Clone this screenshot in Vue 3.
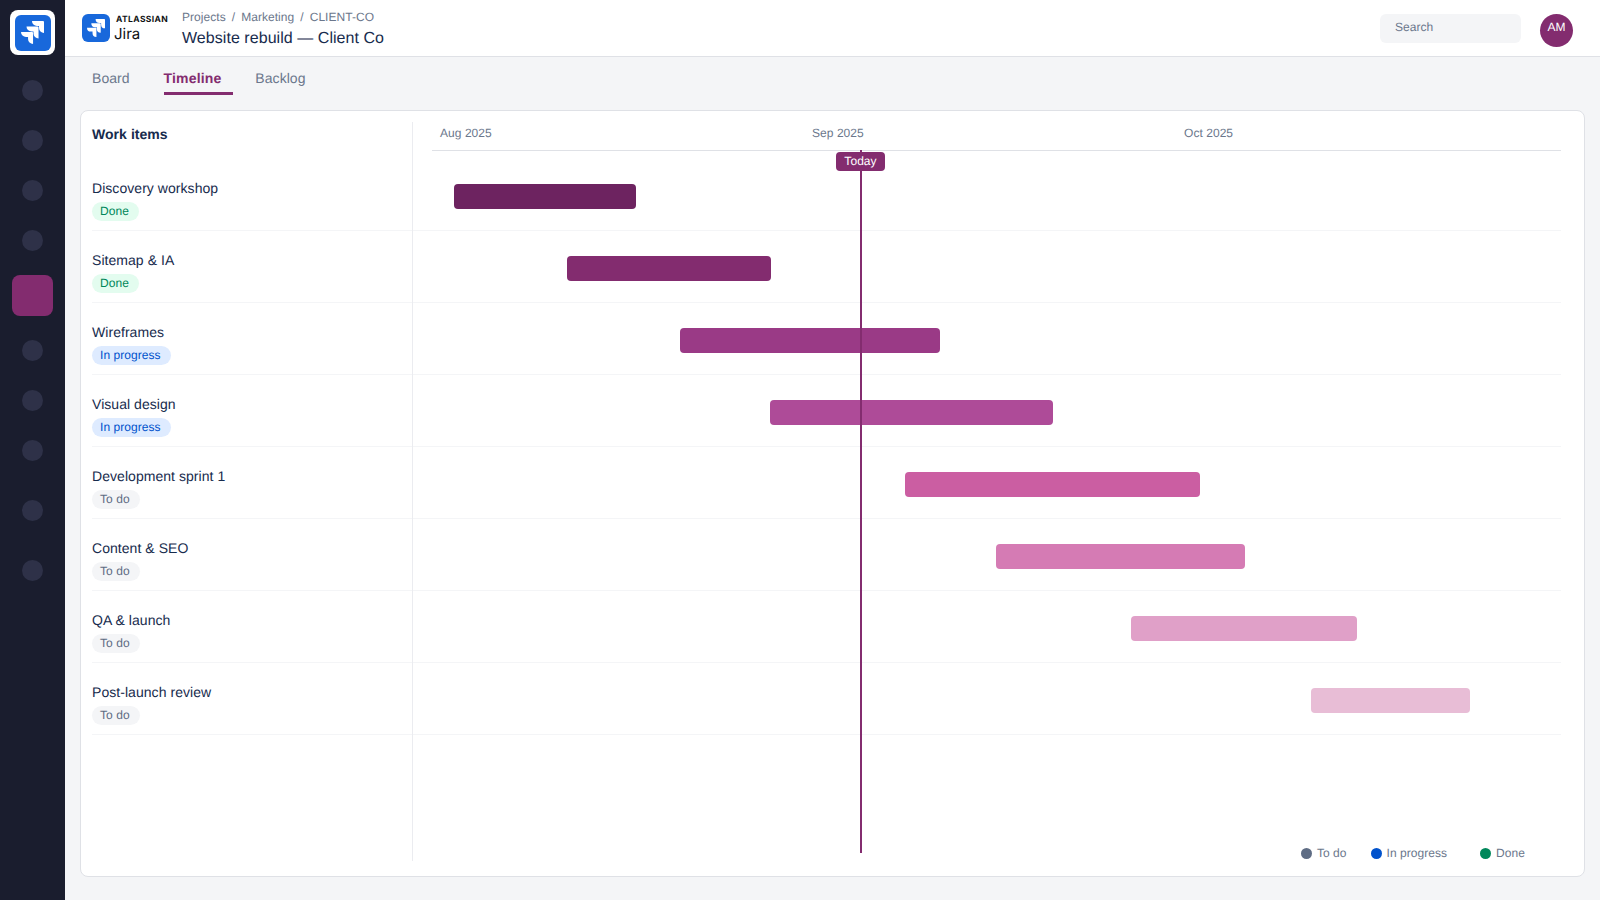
<script setup>
const railItems = [
  { id: 1 }, { id: 2 }, { id: 3 }, { id: 4 },
  { id: 5, active: true },
  { id: 6 }, { id: 7 }, { id: 8 },
  { id: 9, spaced: true }, { id: 10, spaced: true },
]

const tabs = [
  { label: 'Board' },
  { label: 'Timeline', active: true },
  { label: 'Backlog' },
]

const months = ['Aug 2025', 'Sep 2025', 'Oct 2025']

const statusLabel = { done: 'Done', progress: 'In progress', todo: 'To do' }

// start / width in px from the left edge of the timeline column
const items = [
  { name: 'Discovery workshop', status: 'done', start: 41, width: 182, color: '#6d2360' },
  { name: 'Sitemap & IA', status: 'done', start: 154, width: 204, color: '#832c6f' },
  { name: 'Wireframes', status: 'progress', start: 267, width: 260, color: '#9a3a86' },
  { name: 'Visual design', status: 'progress', start: 357, width: 283, color: '#ae4b98' },
  { name: 'Development sprint 1', status: 'todo', start: 492, width: 295, color: '#cb5ea2' },
  { name: 'Content & SEO', status: 'todo', start: 583, width: 249, color: '#d57bb4' },
  { name: 'QA & launch', status: 'todo', start: 718, width: 226, color: '#e0a0c8' },
  { name: 'Post-launch review', status: 'todo', start: 898, width: 159, color: '#e8bdd6' },
]

const legend = [
  { label: 'To do', cls: 'todo' },
  { label: 'In progress', cls: 'progress' },
  { label: 'Done', cls: 'done' },
]

const jiraMark = 'M11.571 11.513H0a5.218 5.218 0 0 0 5.232 5.215h2.13v2.057A5.215 5.215 0 0 0 12.575 24V12.518a1.005 1.005 0 0 0-1.005-1.005zm5.723-5.756H5.736a5.215 5.215 0 0 0 5.215 5.214h2.129v2.058a5.218 5.218 0 0 0 5.215 5.214V6.758a1.001 1.001 0 0 0-1.001-1.001zM23.013 0H11.455a5.215 5.215 0 0 0 5.215 5.215h2.129v2.057A5.215 5.215 0 0 0 24 12.483V1.005A1.001 1.001 0 0 0 23.013 0Z'
</script>

<template>
  <div class="app">
    <aside class="rail">
      <div class="rail-logo">
        <div class="rail-logo-tile">
          <svg class="rail-logo-mark" viewBox="0 0 24 24"><path :d="jiraMark" fill="#fff" /></svg>
        </div>
      </div>
      <div
        v-for="item in railItems"
        :key="item.id"
        class="rail-item"
        :class="{ active: item.active, spaced: item.spaced }"
      ></div>
    </aside>

    <div class="main">
      <header class="topbar">
        <div class="brand">
          <div class="brand-tile">
            <svg class="brand-mark" viewBox="0 0 24 24"><path :d="jiraMark" fill="#fff" /></svg>
          </div>
          <div class="brand-text">
            <div class="brand-company">ATLASSIAN</div>
            <div class="brand-product">Jira</div>
          </div>
        </div>
        <div class="heading">
          <div class="crumbs">
            <span>Projects</span><span class="sep">/</span>
            <span>Marketing</span><span class="sep">/</span>
            <span>CLIENT-CO</span>
          </div>
          <div class="page-title">Website rebuild — Client Co</div>
        </div>
        <div class="search">Search</div>
        <div class="avatar">AM</div>
      </header>

      <nav class="tabs">
        <div v-for="tab in tabs" :key="tab.label" class="tab" :class="{ active: tab.active }">{{ tab.label }}</div>
      </nav>

      <section class="card">
        <div class="list">
          <div class="list-head">Work items</div>
          <div v-for="item in items" :key="item.name" class="list-row">
            <div class="item-name">{{ item.name }}</div>
            <span class="badge" :class="item.status">{{ statusLabel[item.status] }}</span>
          </div>
        </div>

        <div class="chart">
          <div class="months">
            <div v-for="m in months" :key="m" class="month">{{ m }}</div>
          </div>
          <div v-for="item in items" :key="item.name" class="chart-row">
            <div
              class="bar"
              :style="{ marginLeft: item.start + 'px', width: item.width + 'px', background: item.color }"
            ></div>
          </div>
          <div class="legend">
            <div v-for="l in legend" :key="l.label" class="legend-item" :class="l.cls">
              <span class="legend-dot"></span>{{ l.label }}
            </div>
          </div>
          <div class="today-line"></div>
          <div class="today-tag">Today</div>
        </div>
      </section>
    </div>
  </div>
</template>

<style>
html, body { margin: 0; background: #f4f5f7; }
</style>

<style scoped>
.app {
  display: flex;
  width: 1600px;
  height: 900px;
  overflow: hidden;
  font-family: "Liberation Sans", Arial, sans-serif;
  text-rendering: geometricPrecision;
  letter-spacing: 0.05px;
  color: #172b4d;
  background: #f4f5f7;
}

/* left rail */
.rail {
  width: 65px;
  flex-shrink: 0;
  background: #1a1d2e;
  display: flex;
  flex-direction: column;
  align-items: center;
  padding-top: 10px;
  box-sizing: border-box;
}
.rail-logo {
  width: 45px; height: 45px;
  background: #fff;
  border-radius: 8px;
  display: flex; align-items: center; justify-content: center;
  margin-bottom: 25px;
}
.rail-logo-tile {
  width: 36px; height: 36px;
  background: #1868db;
  border-radius: 6px;
  display: flex; align-items: center; justify-content: center;
}
.rail-logo-mark { width: 23px; height: 23px; }
.rail-item {
  width: 21px; height: 21px;
  border-radius: 50%;
  background: #2e3148;
  flex-shrink: 0;
}
.rail-item + .rail-item { margin-top: 29px; }
.rail-item.active,
.rail-item + .rail-item.active {
  width: 41px; height: 41px;
  border-radius: 8px;
  background: #832c6f;
  margin-top: 24px;
}
.rail-item.active + .rail-item { margin-top: 24px; }
.rail-item + .rail-item.spaced { margin-top: 39px; }

.main {
  flex: 1;
  min-width: 0;
  display: flex;
  flex-direction: column;
}

/* top bar */
.topbar {
  height: 57px;
  box-sizing: border-box;
  flex-shrink: 0;
  background: #fff;
  border-bottom: 1px solid #dfe1e6;
  display: flex;
  align-items: flex-start;
  padding: 0 27px 0 17px;
}
.brand { display: flex; margin-top: 14px; }
.brand-tile {
  width: 28px; height: 28px;
  background: #1868db;
  border-radius: 6px;
  display: flex; align-items: center; justify-content: center;
}
.brand-mark { width: 18px; height: 18px; }
.brand-text { margin-left: 4px; width: 68px; }
.brand-company {
  font-family: Inter, sans-serif;
  font-size: 8.5px;
  font-weight: 700;
  line-height: 10px;
  letter-spacing: 0.4px;
  color: #101214;
  margin: 1px 0 0 2px;
}
.brand-product {
  font-family: Inter, sans-serif;
  font-size: 15px;
  font-weight: 400;
  line-height: 17px;
  letter-spacing: 0;
  color: #101214;
}
.heading { margin: 9px 0 0 0; }
.crumbs { font-size: 12px; line-height: 16px; color: #6b778c; }
.sep { margin: 0 6px; }
.page-title { font-size: 16px; line-height: 20px; margin-top: 4px; color: #172b4d; }
.search {
  margin: 14px 0 0 auto;
  width: 141px; height: 29px;
  box-sizing: border-box;
  padding: 5px 15px;
  background: #f4f5f7;
  border-radius: 6px;
  font-size: 12px;
  line-height: 16px;
  color: #6b778c;
}
.avatar {
  width: 33px; height: 33px;
  margin: 14px 0 0 19px;
  border-radius: 50%;
  background: #832c6f;
  color: #fff;
  font-size: 12px;
  line-height: 26px;
  text-align: center;
}

/* tabs */
.tabs {
  display: flex;
  gap: 22px;
  height: 38px;
  padding-left: 27px;
  flex-shrink: 0;
}
.tab {
  height: 38px;
  box-sizing: border-box;
  padding: 13px 12px 0 0;
  font-size: 14px;
  line-height: 16px;
  color: #6b778c;
}
.tab.active {
  font-weight: 700;
  letter-spacing: 0.15px;
  color: #832c6f;
  border-bottom: 3px solid #832c6f;
}

/* card */
.card {
  margin: 15px 15px 23px;
  flex: 1;
  min-height: 0;
  background: #fff;
  border: 1px solid #dfe1e6;
  border-radius: 8px;
  display: flex;
  padding: 11px 23px 15px 11px;
}
.list {
  width: 320px;
  flex-shrink: 0;
  border-right: 1px solid #ebecf0;
}
.list-head {
  height: 37px;
  box-sizing: border-box;
  padding-top: 4px;
  font-size: 14px;
  line-height: 16px;
  font-weight: 700;
}
.list-row {
  height: 72px;
  box-sizing: border-box;
  padding-top: 21px;
  border-bottom: 1px solid #f4f5f7;
}
.item-name { font-size: 14px; line-height: 16px; }
.badge {
  display: inline-block;
  height: 19px;
  margin-top: 6px;
  padding: 0 10px 0 8px;
  border-radius: 10px;
  font-size: 12px;
  line-height: 18px;
  vertical-align: top;
}
.badge.done { background: #e3fcef; color: #00875a; }
.badge.progress { background: #deebff; color: #0052cc; }
.badge.todo { background: #f4f5f7; color: #5e6c84; }

/* timeline */
.chart {
  flex: 1;
  min-width: 0;
  position: relative;
  display: flex;
  flex-direction: column;
}
.months {
  height: 29px;
  box-sizing: border-box;
  margin: 0 0 8px 19px;
  border-bottom: 1px solid #dfe1e6;
  display: flex;
}
.month {
  flex: 0 0 372px;
  box-sizing: border-box;
  padding: 3px 0 0 8px;
  font-size: 12px;
  line-height: 16px;
  color: #6b778c;
}
.chart-row {
  height: 72px;
  box-sizing: border-box;
  padding-top: 25px;
  border-bottom: 1px solid #f4f5f7;
}
.bar { height: 25px; border-radius: 4px; }
.legend {
  margin-top: auto;
  display: flex;
  justify-content: flex-end;
  padding: 0 36px 0 0;
}
.legend-item {
  display: flex;
  align-items: center;
  gap: 5px;
  font-size: 12px;
  line-height: 16px;
  color: #6b778c;
}
.legend-item + .legend-item { margin-left: 24px; }
.legend-item.done { margin-left: 33px; }
.legend-dot { width: 11px; height: 11px; border-radius: 50%; }
.todo .legend-dot { background: #5e6c84; }
.progress .legend-dot { background: #0052cc; }
.done .legend-dot { background: #00875a; }

.today-line {
  position: absolute;
  left: 447px;
  top: 28px;
  width: 2px;
  height: 703px;
  background: #832c6f;
}
.today-tag {
  position: absolute;
  left: 423px;
  top: 30px;
  width: 49px;
  height: 19px;
  border-radius: 4px;
  background: #832c6f;
  color: #fff;
  font-size: 12px;
  line-height: 18px;
  text-align: center;
}
</style>
